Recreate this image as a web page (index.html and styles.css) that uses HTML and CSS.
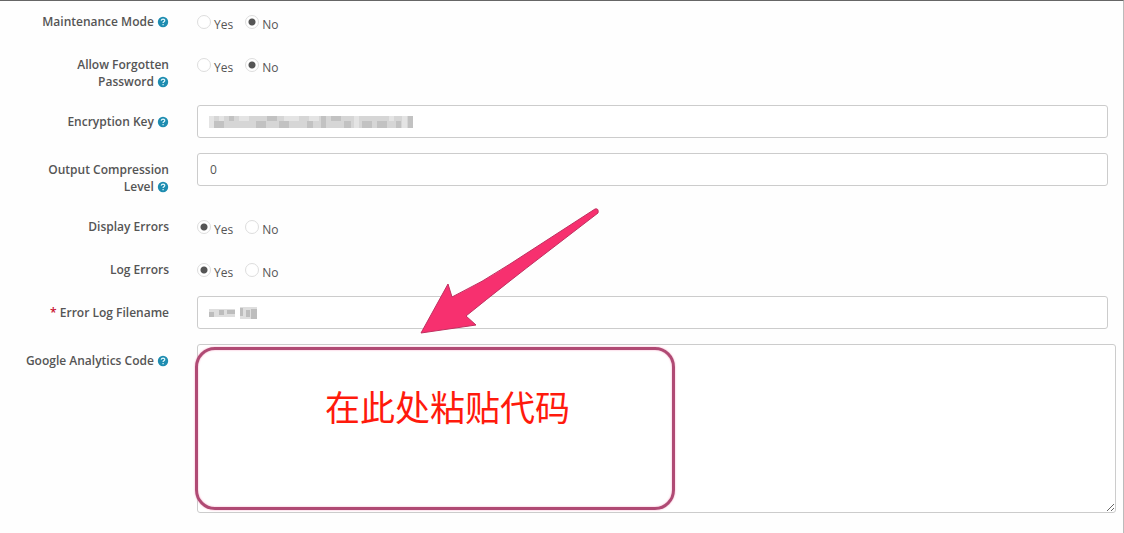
FILE: index.html
```html
<!DOCTYPE html>
<html lang="en">
<head>
    <meta charset="UTF-8" />
    <title>Server Settings</title>
    <link rel="stylesheet" href="styles.css">
</head>
<body>
    <svg class="sprite" aria-hidden="true">
        <symbol id="help" viewBox="0 0 12 12">
            <circle cx="6" cy="6" r="5.2" fill="#1e8cb0" />
            <path d="M4.2 4.6Q4.4 3.1 6 3.1Q7.8 3.2 7.7 4.6Q7.6 5.4 6.7 5.8Q6.1 6.1 6.1 6.9M6.1 8.1V9.2" fill="none" stroke="#d8f2f8" stroke-width="1.3" />
        </symbol>
    </svg>

    <form class="settings">
        <div class="form-group" role="radiogroup" aria-labelledby="maintenance-label">
            <div class="label" id="maintenance-label">Maintenance Mode <svg class="help"><use href="#help" /></svg></div>
            <div class="radios">
                <label class="radio"><input type="radio" name="maintenance" value="1"><span>Yes</span></label>
                <label class="radio"><input type="radio" name="maintenance" value="0" checked><span>No</span></label>
            </div>
        </div>

        <div class="form-group" role="radiogroup" aria-labelledby="password-label">
            <div class="label" id="password-label">Allow Forgotten Password <svg class="help"><use href="#help" /></svg></div>
            <div class="radios">
                <label class="radio"><input type="radio" name="password" value="1"><span>Yes</span></label>
                <label class="radio"><input type="radio" name="password" value="0" checked><span>No</span></label>
            </div>
        </div>

        <div class="form-group">
            <label class="label" for="encryption">Encryption Key <svg class="help"><use href="#help" /></svg></label>
            <div class="field">
                <input class="form-control" type="text" id="encryption">
                <svg class="mosaic" width="204" height="12" viewBox="0 0 204 12">
                    <path fill="#d6d6d6" d="M0 0H204V12H0Z" />
                    <path fill="#e4e4e4" d="M0 0H5V12H0ZM10 0H15V5H10ZM30 0H40V5H30ZM75 0H90V5H75ZM100 0H110V5H100ZM145 0H150V12H145ZM180 0H185V5H180ZM193 0H198V12H193Z" />
                    <path fill="#c2c2c2" d="M5 5H15V12H5ZM20 0H25V5H20ZM47 5H57V12H47ZM58 0H68V5H58ZM70 5H80V12H70ZM98 5H104V12H98ZM112 0H117V12H112ZM122 0H132V5H122ZM135 5H142V12H135ZM153 5H163V12H153ZM168 5H178V12H168ZM187 5H192V12H187ZM199 0H204V12H199Z" />
                </svg>
            </div>
        </div>

        <div class="form-group">
            <label class="label" for="compression">Output Compression Level <svg class="help"><use href="#help" /></svg></label>
            <div class="field">
                <input class="form-control" type="text" id="compression" value="0">
            </div>
        </div>

        <div class="form-group" role="radiogroup" aria-labelledby="display-label">
            <div class="label" id="display-label">Display Errors</div>
            <div class="radios">
                <label class="radio"><input type="radio" name="display" value="1" checked><span>Yes</span></label>
                <label class="radio"><input type="radio" name="display" value="0"><span>No</span></label>
            </div>
        </div>

        <div class="form-group" role="radiogroup" aria-labelledby="log-label">
            <div class="label" id="log-label">Log Errors</div>
            <div class="radios">
                <label class="radio"><input type="radio" name="log" value="1" checked><span>Yes</span></label>
                <label class="radio"><input type="radio" name="log" value="0"><span>No</span></label>
            </div>
        </div>

        <div class="form-group">
            <label class="label" for="filename"><span class="required">*</span> Error Log Filename</label>
            <div class="field">
                <input class="form-control" type="text" id="filename">
                <svg class="mosaic" width="48" height="12" viewBox="0 0 48 12">
                    <path fill="#dedede" d="M0 2H26V10H0ZM31 0H48V12H31Z" />
                    <path fill="#bdbdbd" d="M0 5H5V10H0ZM10 3H15V8H10ZM18 3H26V7H18ZM31 1H34V9H31ZM37 3H41V10H37ZM42 2H48V12H42Z" />
                </svg>
            </div>
        </div>

        <div class="form-group">
            <label class="label" for="analytics">Google Analytics Code <svg class="help"><use href="#help" /></svg></label>
            <div class="field field-wide">
                <textarea class="form-control" id="analytics"></textarea>
                <div class="callout">在此处粘贴代码</div>
                <svg class="arrow" viewBox="0 0 184 130">
                    <path d="M3 126L30 77L34 90Q65 75 92 57L177 2Q181 1 180 6L128 46Q90 75 48 109L58 118Z" />
                </svg>
            </div>
        </div>
    </form>
</body>
</html>
```
FILE: styles.css
```css
* {
    box-sizing: border-box;
}

body {
    margin: 0;
    min-height: 100vh;
    border-top: 1px solid #666;
    border-right: 1px solid #bbb;
    background: #fefefe;
    color: #555;
    font-family: "Open Sans", "Noto Sans CJK SC", sans-serif;
    font-size: 12px;
    line-height: 17px;
}

.sprite {
    display: none;
}

.settings {
    display: flex;
    flex-direction: column;
    gap: 15px;
    padding: 4px 15px 20px 20px;
}

.form-group {
    display: flex;
    gap: 28px;
    min-height: 28px;
}

.label {
    flex: 0 0 149px;
    padding-top: 8px;
    font-weight: 600;
    text-align: right;
}

.help {
    width: 12px;
    height: 12px;
    vertical-align: -2px;
}

.required {
    color: #c8102e;
}

.radios {
    display: flex;
    align-items: flex-start;
    gap: 12px;
    padding-top: 10px;
}

.radio {
    display: flex;
    align-items: flex-start;
    gap: 3px;
}

.radio input {
    appearance: none;
    width: 14px;
    height: 14px;
    margin: 0;
    border: 1px solid #ddd;
    border-radius: 50%;
    background: #fff;
}

.radio input:checked {
    background: radial-gradient(circle, #555 3px, #fff 4px);
}

.radio span {
    padding-top: 1px;
}

.field {
    position: relative;
    flex: 1;
}

.field-wide {
    margin-right: -8px;
}

.form-control {
    display: block;
    width: 100%;
    height: 33px;
    padding: 7px 12px;
    border: 1px solid #ccc;
    border-radius: 3px;
    background: #fff;
    color: #555;
    font: inherit;
}

textarea.form-control {
    height: 169px;
    resize: both;
}

/* blurred out private values */
.mosaic {
    position: absolute;
    left: 12px;
    top: 11px;
}

.callout {
    position: absolute;
    left: -2px;
    top: 3px;
    width: 480px;
    height: 163px;
    padding-top: 34px;
    padding-left: 127px;
    border: 3px solid #b04a74;
    border-radius: 20px;
    box-shadow: 0 0 2px #f8a0c0, inset 0 0 2px #f8a0c0;
    color: #ff1a0c;
    font-size: 35px;
    line-height: 48px;
    pointer-events: none;
}

.arrow {
    position: absolute;
    left: 221px;
    top: -137px;
    width: 184px;
    height: 130px;
    fill: #f7306f;
    stroke: #c03060;
    stroke-width: 1;
    pointer-events: none;
}
```
